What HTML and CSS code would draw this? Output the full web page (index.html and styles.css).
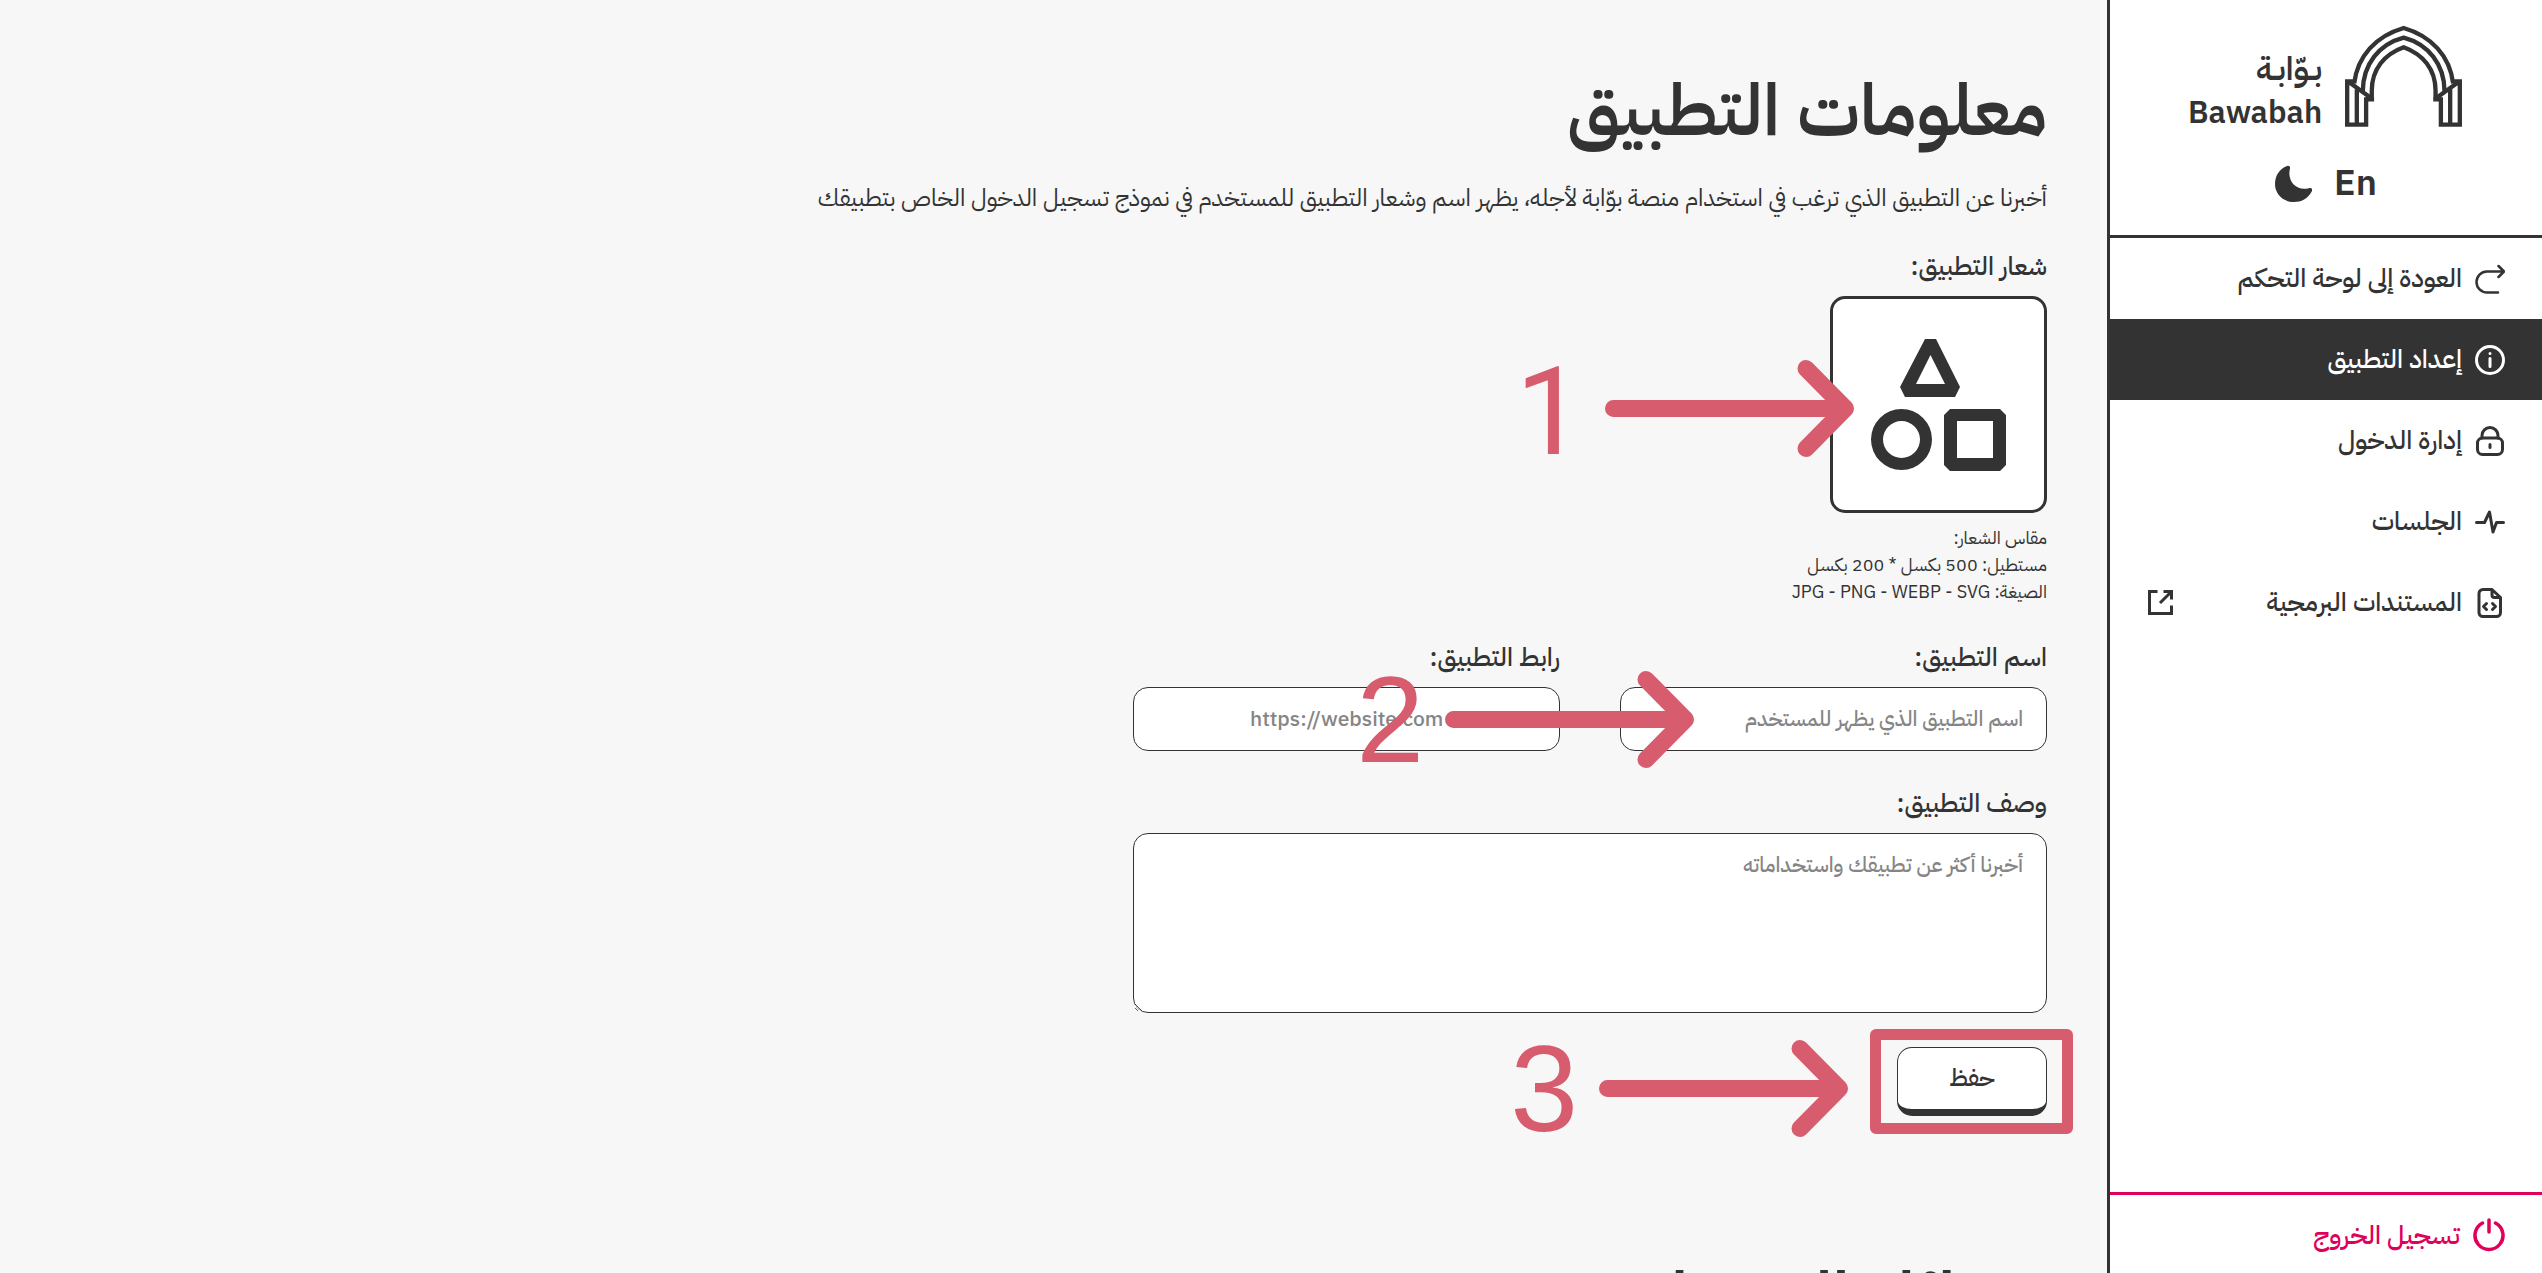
FILE: index.html
```html
<!DOCTYPE html>
<html lang="ar" dir="rtl">
<head>
<meta charset="utf-8">
<meta name="viewport" content="width=device-width, initial-scale=1">
<title>معلومات التطبيق - بوّابة</title>
<link rel="stylesheet" href="styles.css">
</head>
<body>
<aside class="sidebar">
  <header class="sidebar-head">
    <a class="logo" href="#">
      <svg class="logo-arch" viewBox="42 42 351 307" aria-hidden="true">
        <path d="M69 218C79 135 135 75 218 51C301 75 357 135 367 218"/>
        <path d="M95 242C95 160 145 99 218 80C291 99 341 160 341 242"/>
        <path d="M122 262V240C122 175 160 130 218 109C276 130 314 175 314 240V262"/>
        <path d="M66 212H48V342H105V266H129M56 216L122 263M77 236V342"/>
        <path d="M370 212H387V342H330V266H307M380 216L314 263M358 236V342"/>
      </svg>
      <span class="logo-text">
        <span class="logo-ar">بـوّابـة</span>
        <span class="logo-en" lang="en">Bawabah</span>
      </span>
    </a>
    <div class="switches">
      <button class="switch" type="button" lang="en">En</button>
      <button class="switch" type="button" aria-label="الوضع الداكن">
        <svg class="moon" viewBox="0 0 37 37" aria-hidden="true"><path d="M12 1C14 0 15.500 1.500 15 3.500C12 15 20 26 33 23.500C36 22.500 38 23.500 37 26C33 34 26 37 19 37C8 37 0 29 0 19C0 11 4 4 12 1Z"/></svg>
      </button>
    </div>
  </header>
  <nav class="nav">
    <a class="nav-item" href="#">
      <svg class="icon thin" viewBox="0 0 30 30" aria-hidden="true"><path d="M23 28.500H12A10.500 10.500 0 0 1 12 7.500H29M23.500 2L29 7.500L23.500 13"/></svg>
      <span>العودة إلى لوحة التحكم</span>
    </a>
    <a class="nav-item active" href="#" aria-current="page">
      <svg class="icon" viewBox="0 0 30 30" aria-hidden="true"><circle cx="15" cy="15" r="13.500"/><path d="M15 13.500V21.500M15 8.500V8.600"/></svg>
      <span>إعداد التطبيق</span>
    </a>
    <a class="nav-item" href="#">
      <svg class="icon" viewBox="0 0 30 30" aria-hidden="true"><rect x="2.500" y="12" width="25" height="16.500" rx="5"/><path d="M7 12V9.500A8 8 0 0 1 23 9.500V12M15 18.500V21.500"/></svg>
      <span>إدارة الدخول</span>
    </a>
    <a class="nav-item" href="#">
      <svg class="icon" viewBox="0 0 30 30" aria-hidden="true"><path d="M1.500 15.500H9.500L14.500 5L18 25L21.500 15.500H28.500"/></svg>
      <span>الجلسات</span>
    </a>
    <a class="nav-item" href="#">
      <svg class="icon" viewBox="0 0 30 30" aria-hidden="true"><path d="M17 1.500H8A4 4 0 0 0 4 5.500V24.500A4 4 0 0 0 8 28.500H21.500A4 4 0 0 0 25.500 24.500V9.500ZM17 2V7A2.500 2.500 0 0 0 19.500 9.500H25.500M11.500 15.500L8.500 18.500L11.500 21.500M17.500 15.500L20.500 18.500L17.500 21.500"/></svg>
      <span>المستندات البرمجية</span>
      <svg class="external" viewBox="0 0 25 25" aria-hidden="true"><path d="M9.500 1.500H1.500V23.500H23.500V15.500M15.500 1.500H23.500V9.500M23.500 1.500L12 13"/></svg>
    </a>
  </nav>
  <a class="logout" href="#">
    <svg class="power" viewBox="0 0 32 34" aria-hidden="true"><path d="M9.500 5A14 14 0 1 0 22.500 5M16 2V14"/></svg>
    <span>تسجيل الخروج</span>
  </a>
</aside>

<main class="content">
  <h1 class="title">معلومات التطبيق</h1>
  <p class="lead">أخبرنا عن التطبيق الذي ترغب في استخدام منصة بوّابة لأجله، يظهر اسم وشعار التطبيق للمستخدم في نموذج تسجيل الدخول الخاص بتطبيقك</p>

  <form class="form">
    <div class="field">
      <label class="label" for="app-logo">شعار التطبيق:</label>
      <div class="anchor">
        <button class="logo-picker" id="app-logo" type="button">
          <svg viewBox="3 3 211 211" aria-hidden="true">
            <path d="M95 43H106L130 91L125 101H75L70 91ZM100.500 59L86 88H115Z"/>
            <path d="M41 143.500A30.500 30.500 0 1 0 102 143.500A30.500 30.500 0 1 0 41 143.500ZM53 143.500A18.500 18.500 0 1 0 90 143.500A18.500 18.500 0 1 0 53 143.500Z"/>
            <path d="M120 113H170L176 119V169L170 175H120L114 169V119ZM127 125V162H163V125Z"/>
          </svg>
        </button>
        <div class="marker marker-logo" dir="ltr"><span>1</span><svg class="arrow" viewBox="0 0 249 97" aria-hidden="true"><path d="M8.500 48.500H240.500M201 8.500L240.500 48.500L201 88.500"/></svg></div>
      </div>
      <p class="hint">مقاس الشعار:<br>مستطيل: 500 بكسل * 200 بكسل<br>الصيغة: JPG - PNG - WEBP - SVG</p>
    </div>

    <div class="field-row">
      <div class="field">
        <label class="label" for="app-name">اسم التطبيق:</label>
        <div class="anchor">
          <input class="input" id="app-name" type="text" placeholder="اسم التطبيق الذي يظهر للمستخدم">
          <div class="marker marker-name" dir="ltr"><span>2</span><svg class="arrow" viewBox="0 0 249 97" aria-hidden="true"><path d="M8.500 48.500H240.500M201 8.500L240.500 48.500L201 88.500"/></svg></div>
        </div>
      </div>
      <div class="field">
        <label class="label" for="app-url">رابط التطبيق:</label>
        <input class="input url" id="app-url" type="text" placeholder="https://website.com">
      </div>
    </div>

    <div class="field">
      <label class="label" for="app-about">وصف التطبيق:</label>
      <textarea class="input about" id="app-about" placeholder="أخبرنا أكثر عن تطبيقك واستخداماته"></textarea>
    </div>

    <div class="anchor save-anchor">
      <button class="save" type="submit">حفظ</button>
      <div class="frame"></div>
      <div class="marker marker-save" dir="ltr"><span>3</span><svg class="arrow" viewBox="0 0 249 97" aria-hidden="true"><path d="M8.500 48.500H240.500M201 8.500L240.500 48.500L201 88.500"/></svg></div>
    </div>
  </form>

  <h2 class="title next">وسائل الدخول</h2>
</main>
</body>
</html>
```
FILE: styles.css
```css
:root {
  --ink: #333;
  --page: #f7f7f7;
  --danger: #e0005a;
  --mark: #d75c6e;
}

* { box-sizing: border-box; }

body {
  margin: 0;
  display: flex;
  height: 100vh;
  overflow: hidden;
  background: var(--page);
  color: var(--ink);
  font-family: "IBM Plex Sans Arabic", "Noto Sans", "DejaVu Sans", sans-serif;
  font-size: 24px;
}

a { color: inherit; text-decoration: none; }
button, input, textarea { font: inherit; color: inherit; margin: 0; }
button { cursor: pointer; }
svg { display: block; }

/* Sidebar */
.sidebar {
  flex: none;
  width: 435px;
  display: flex;
  flex-direction: column;
  background: #fff;
  border-left: 3px solid var(--ink);
}

.sidebar-head {
  padding: 25px 0;
  border-bottom: 3px solid var(--ink);
}

.logo {
  display: flex;
  justify-content: center;
  align-items: flex-end;
  gap: 23px;
  padding-right: 2px;
}

.logo-arch {
  width: 117px;
  height: 102px;
  margin-bottom: 8px;
  fill: none;
  stroke: var(--ink);
  stroke-width: 13;
}

.logo-text {
  display: flex;
  flex-direction: column;
  font-weight: 600;
  line-height: 44px;
}

.logo-ar { font-size: 33px; }
.logo-en { font-size: 31px; }

.switches {
  display: flex;
  justify-content: center;
  align-items: center;
  gap: 22px;
  margin-top: 21px;
}

.switch {
  padding: 0;
  border: 0;
  background: none;
  font-size: 36px;
  font-weight: 600;
  line-height: 54px;
}

.moon { width: 37px; height: 37px; fill: var(--ink); }

.nav { flex: 1; }

.nav-item {
  display: flex;
  align-items: center;
  gap: 13px;
  height: 81px;
  padding: 0 37px 0 38px;
  font-size: 26px;
  font-weight: 500;
}

.nav-item.active { background: var(--ink); color: #fff; }

.icon, .external, .power {
  flex: none;
  fill: none;
  stroke: currentColor;
  stroke-width: 3;
  stroke-linecap: round;
  stroke-linejoin: round;
}

.icon { width: 30px; height: 30px; }
.icon.thin { stroke-width: 2.5; }

.external {
  width: 25px;
  height: 25px;
  margin-right: auto;
  stroke-linecap: butt;
  stroke-linejoin: miter;
}

.power { width: 32px; height: 34px; stroke-width: 3.5; }

.logout {
  display: flex;
  align-items: center;
  gap: 13px;
  height: 81px;
  padding: 2px 37px 0;
  border-top: 3px solid var(--danger);
  color: var(--danger);
  font-size: 26px;
  font-weight: 500;
}

/* Content */
.content {
  flex: 1;
  min-width: 0;
  padding: 57px 60px 60px;
  overflow-y: auto;
  scrollbar-width: none;
}

.title {
  margin: 0;
  font-size: 72px;
  font-weight: 600;
  line-height: 108px;
}

.title.next { margin-top: 129px; }

.lead { margin: 15px 0 32px; line-height: 36px; }

.form {
  display: flex;
  flex-direction: column;
  gap: 34px;
  max-width: 914px;
}

.field {
  display: flex;
  flex-direction: column;
  gap: 11px;
}

.field-row {
  display: grid;
  grid-template-columns: 1fr 1fr;
  gap: 60px;
}

.label {
  font-size: 26px;
  font-weight: 500;
  line-height: 37px;
}

.anchor { position: relative; }

.logo-picker {
  display: block;
  width: 217px;
  height: 217px;
  padding: 0;
  border: 3px solid var(--ink);
  border-radius: 15px;
  background: #fff;
  fill: var(--ink);
  fill-rule: evenodd;
}

.hint { margin: 0; font-size: 18px; line-height: 27px; }

.input {
  display: block;
  width: 100%;
  height: 64px;
  padding: 0 23px;
  border: 1px solid var(--ink);
  border-radius: 15px;
  background: #fff;
  font-size: 21px;
  font-weight: 500;
}

.input::placeholder { color: #858585; opacity: 1; }

.url { direction: ltr; padding-left: 116px; }

.about { height: 180px; padding: 14px 23px; line-height: 35px; }

.save-anchor { align-self: flex-start; }

.save {
  display: block;
  width: 150px;
  height: 69px;
  padding: 0 0 2px;
  border: 1px solid var(--ink);
  border-bottom-width: 7px;
  border-radius: 15px;
  background: #fff;
  font-size: 24px;
  font-weight: 500;
}

/* Numbered step markers drawn over the form */
.frame {
  position: absolute;
  inset: -18px -26px -18px -27px;
  border: 11px solid var(--mark);
  border-radius: 6px;
  pointer-events: none;
}

.marker {
  position: absolute;
  z-index: 1;
  display: flex;
  gap: 21px;
  color: var(--mark);
  font: 122px/99px "Liberation Sans", Arial, sans-serif;
  pointer-events: none;
}

.arrow {
  width: 249px;
  height: 97px;
  fill: none;
  stroke: var(--mark);
  stroke-width: 17;
  stroke-linecap: round;
  stroke-linejoin: round;
}

.marker-logo {
  top: 64px;
  right: 193px;
  font-family: Roboto, sans-serif;
  line-height: 105px;
}

.marker-name { top: -16px; right: 353px; }
.marker-save { top: -7px; right: 199px; }
```
